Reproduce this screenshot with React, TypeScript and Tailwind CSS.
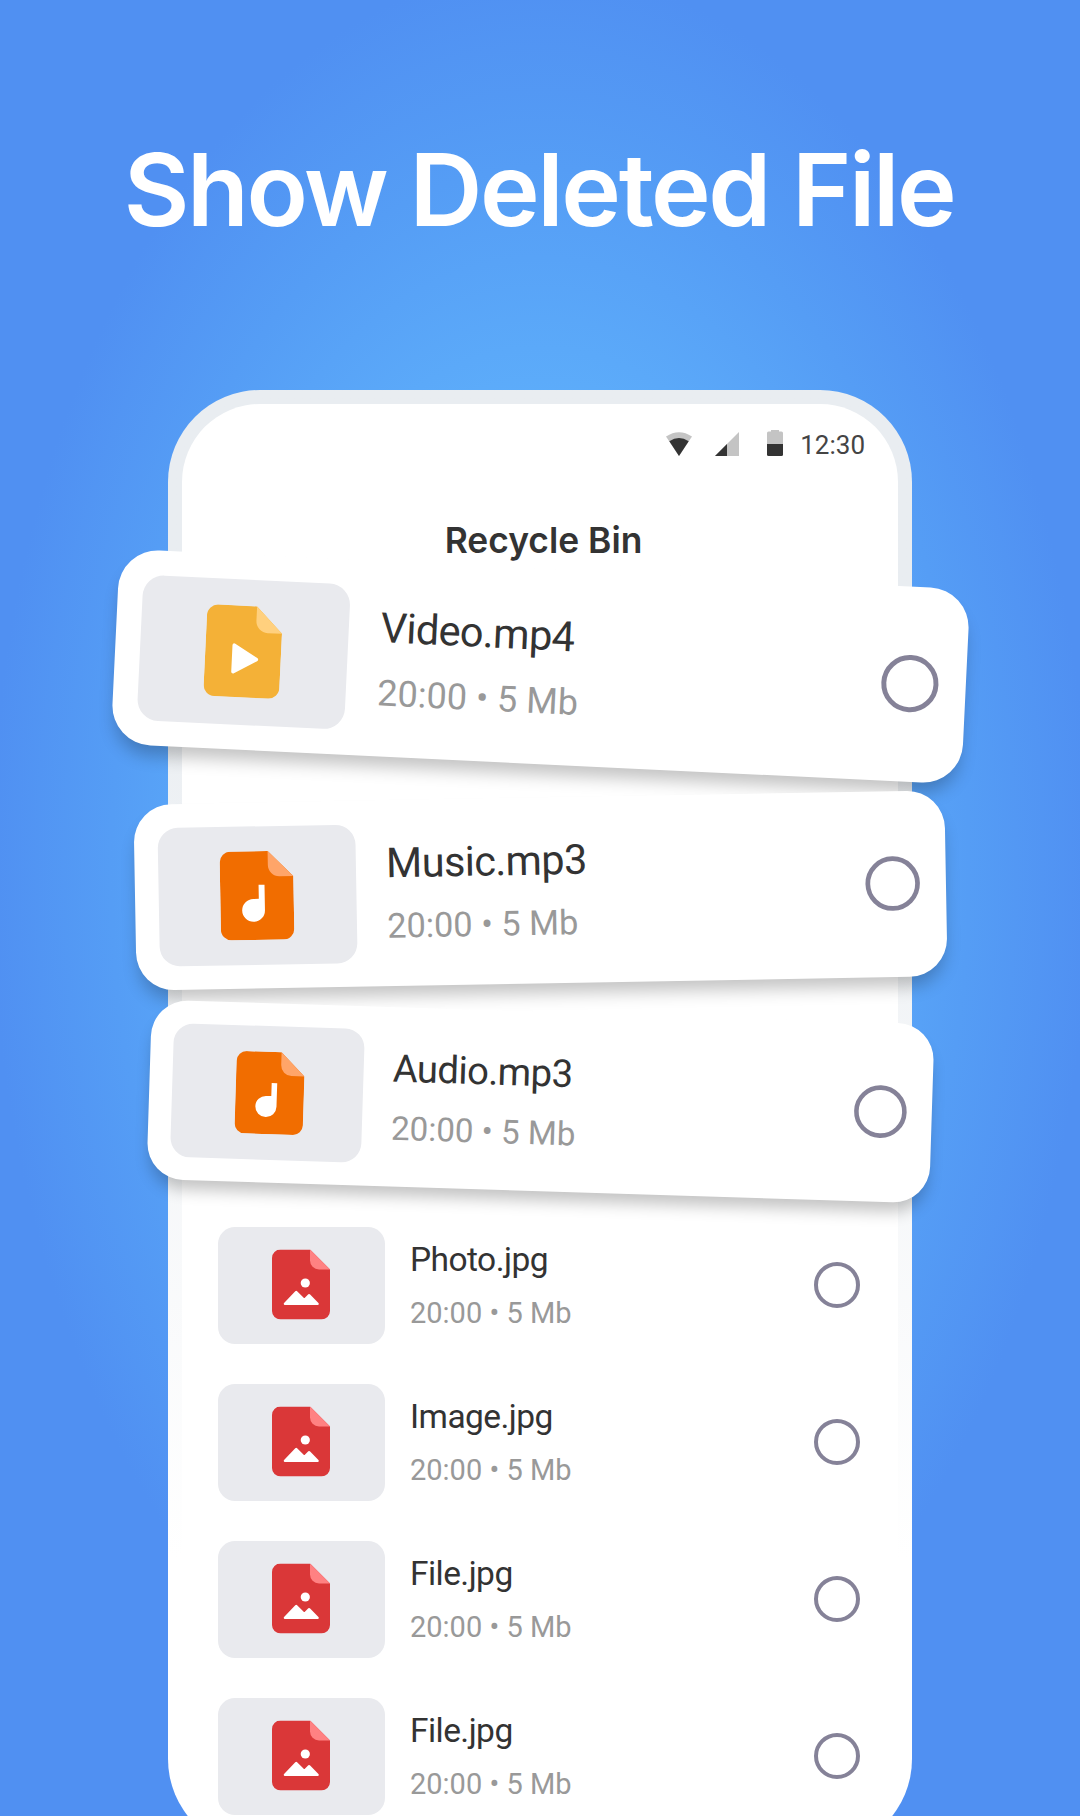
import React from "react";
import { clsx } from "clsx";

type FileKind = "video" | "audio" | "image";

interface FileItem {
  name: string;
  kind: FileKind;
  meta: string;
  // placement of the floating cards, plain rows leave this out
  card?: string;
  iconClass?: string;
  nameClass?: string;
}

const files: FileItem[] = [
  {
    name: "Video.mp4",
    kind: "video",
    meta: "20:00 • 5 Mb",
    card: "rotate-[2.75deg] scale-[1.243]",
    iconClass: "w-[61px] h-[74px] -translate-x-[0.5px] -translate-y-px",
  },
  {
    name: "Music.mp3",
    kind: "audio",
    meta: "20:00 • 5 Mb",
    card: "mt-[67px] rotate-[-1.03deg] scale-[1.184]",
    iconClass: "w-[62px] h-[75px] -translate-x-px",
    nameClass: "text-[35px] tracking-[-0.5px]",
  },
  {
    name: "Audio.mp3",
    kind: "audio",
    meta: "20:00 • 5 Mb",
    card: "mt-[54px] mb-[27px] rotate-[1.8deg] scale-[1.143]",
    iconClass: "w-[60px] h-[72px] translate-x-[1.5px] -translate-y-[0.5px]",
  },
  { name: "Photo.jpg", kind: "image", meta: "20:00 • 5 Mb" },
  { name: "Image.jpg", kind: "image", meta: "20:00 • 5 Mb" },
  { name: "File.jpg", kind: "image", meta: "20:00 • 5 Mb" },
  { name: "File.jpg", kind: "image", meta: "20:00 • 5 Mb" },
];

const colors: Record<FileKind, { body: string; fold: string }> = {
  video: { body: "#f4b137", fold: "#ffd07e" },
  audio: { body: "#f16d00", fold: "#ffa569" },
  image: { body: "#da3738", fold: "#ff8182" },
};

function FileIcon({ kind, className }: { kind: FileKind; className?: string }) {
  const { body, fold } = colors[kind];
  return (
    <svg viewBox="0 0 58 70" className={className ?? "w-[58px] h-[70px] -translate-y-[0.5px]"}>
      <path d="M8.5 0H38L58 20V61.5A8.5 8.5 0 0 1 49.5 70H8.5A8.5 8.5 0 0 1 0 61.5V8.5A8.5 8.5 0 0 1 8.5 0Z" fill={body} />
      <path d="M38 0L58 20H47A9 9 0 0 1 38 11Z" fill={fold} />
      {kind === "video" && (
        <path d="M22 30.5V50.7L39.3 40.6Z" fill="#fff" stroke="#fff" strokeWidth="2.8" strokeLinejoin="round" />
      )}
      {kind === "audio" && <path d="M30.4 26.5h4.7v20.1a9 9 0 1 1-9-9h4.3z" fill="#fff" />}
      {kind === "image" && (
        <>
          <circle cx="33.3" cy="33.5" r="4.6" fill="#fff" />
          <path
            d="M13 54.3L24.2 42.6L32.3 50.6L37.2 45.8L45.5 54.3Z"
            fill="#fff"
            stroke="#fff"
            strokeWidth="2.6"
            strokeLinejoin="round"
          />
        </>
      )}
    </svg>
  );
}

function FileRow({ file }: { file: FileItem }) {
  return (
    <li
      className={clsx(
        "flex w-[685px] h-[157px] shrink-0 items-center pl-5 pr-[22.5px]",
        file.card && "rounded-[32px] bg-white shadow-[0_11px_14px_-3px_rgba(0,0,0,0.24)]",
        file.card
      )}
    >
      <div className="flex w-[167px] h-[117px] items-center justify-center rounded-[17px] bg-[#e9eaee]">
        <FileIcon kind={file.kind} className={file.iconClass} />
      </div>
      <div className="ml-[25.5px] flex-1 pt-[3px] font-['Roboto',sans-serif]">
        <p className={clsx("leading-10 text-[#333333]", file.nameClass ?? "text-[33.5px] tracking-[-0.55px]")}>
          {file.name}
        </p>
        <p className="mt-[12.5px] text-[29px] leading-10 text-[#999999]">{file.meta}</p>
      </div>
      <span className="mb-px size-[46px] rounded-full border-4 border-[#858298]" />
    </li>
  );
}

function StatusBar() {
  return (
    <div className="flex h-[52px] items-end justify-end pr-[33px]">
      <svg viewBox="0 0 26 24" className="w-[26px] h-6">
        <path d="M0 4.5Q13-4 26 4.5L13 24Z" fill="#c4c4c4" />
        <path d="M3.3 9.2Q13 3 22.7 9.2L13 24Z" fill="#333" />
      </svg>
      <svg viewBox="0 0 24 24" className="ml-[23px] size-6">
        <path d="M24 0V24H0Z" fill="#c4c4c4" />
        <path d="M12 12V24H0Z" fill="#333" />
      </svg>
      <svg viewBox="0 0 16 26" className="ml-7 w-4 h-[26px]">
        <path d="M4 0h8v1.5h2.5q1.5 0 1.5 1.5v11H0V3q0-1.5 1.5-1.5H4Z" fill="#c4c4c4" />
        <path d="M0 14h16v10.5q0 1.5-1.5 1.5h-13Q0 26 0 24.5Z" fill="#333" />
      </svg>
      <span className="ml-[17px] font-['Roboto',sans-serif] text-[26px] leading-[22px] text-[#444444]">12:30</span>
    </div>
  );
}

export default function App() {
  return (
    <main className="h-[1816px] w-[1080px] overflow-hidden bg-[radial-gradient(ellipse_550px_900px_at_540px_870px,#60b4fd_0%,#5fb1fc_44%,#5ba9f9_58%,#559df5_78%,#5090f2_100%)]">
      <h1 className="pt-[129px] pr-[2px] text-center font-['Inter',sans-serif] text-[101px] font-semibold leading-[120px] tracking-[-2.4px] whitespace-nowrap text-white">
        Show Deleted File
      </h1>

      {/* Phone frame */}
      <div className="mx-auto mt-[141px] h-[1461px] w-[744px] rounded-[92px] bg-linear-to-b from-[#e9edf1] from-15% to-white to-80% p-[14px]">
        <div className="flex h-full flex-col rounded-[78px] bg-white">
          <StatusBar />
          <h2 className="mt-[65px] mb-[26.5px] pl-[7px] text-center font-['Inter',sans-serif] text-[35.4px] font-semibold leading-10 text-[#333333]">
            Recycle Bin
          </h2>
          <ul className="flex flex-col items-center">
            {files.map((file, i) => (
              <FileRow key={i} file={file} />
            ))}
          </ul>
        </div>
      </div>
    </main>
  );
}
